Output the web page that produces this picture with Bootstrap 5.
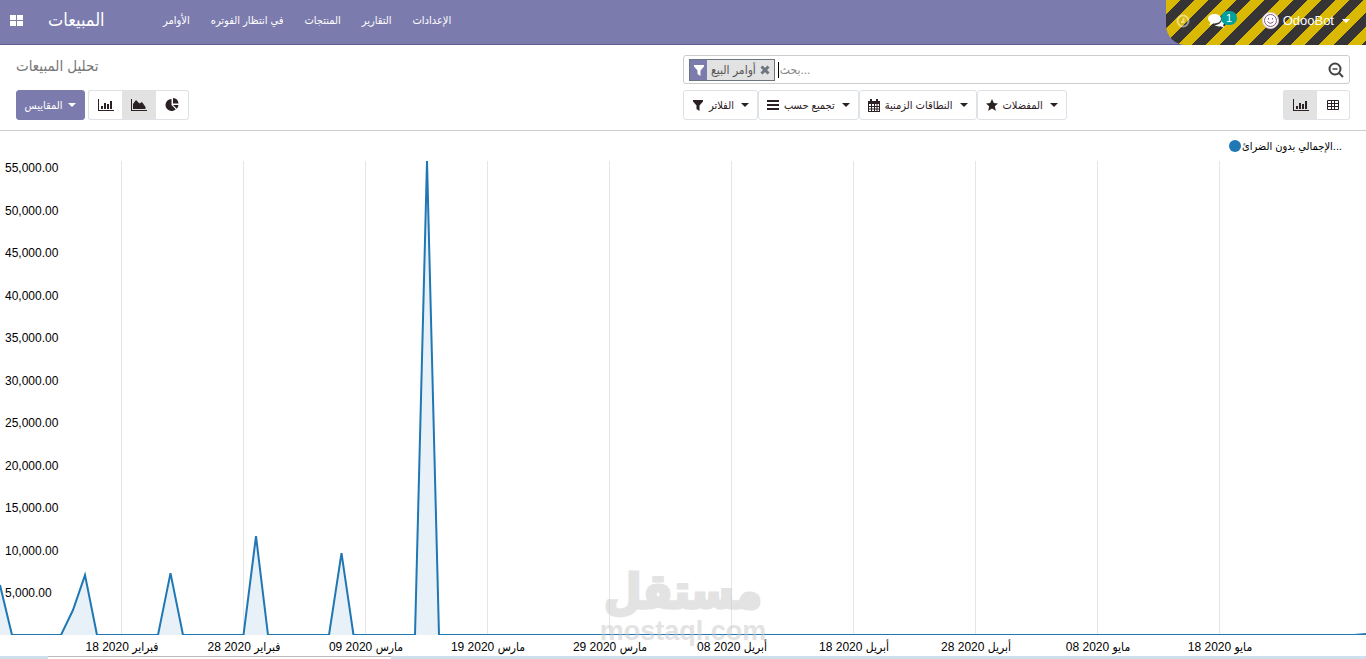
<!DOCTYPE html>
<html lang="ar" dir="ltr">
<head>
<meta charset="utf-8">
<meta name="viewport" content="width=device-width, initial-scale=1">
<title>تحليل المبيعات</title>
<link href="https://cdn.jsdelivr.net/npm/bootstrap@5.3.0/dist/css/bootstrap.min.css" rel="stylesheet">
<style>
body{font-family:"Liberation Sans","DejaVu Sans Condensed","DejaVu Sans",sans-serif;font-size:12px;line-height:18px;color:#212529}
svg{display:block;flex:none}
button{line-height:18px}
.topbar{height:45px;background:#7c7bad;border-bottom:1px solid #5f5e97;color:#fff}
.topbar a{color:#fff;text-decoration:none}
.apps{width:32px;padding-left:10px}
.brandname{font-size:18px;line-height:24px;width:83px;padding-left:16px}
.menu{gap:21px;margin-left:48px;font-size:11px}
.systray{width:200px;margin-bottom:-1px;border-bottom-left-radius:20px;background:repeating-linear-gradient(135deg,#d9b904,#d9b904 10px,#373435 10px,#373435 20px);font-size:13px}
.activity{opacity:.5;margin-left:10px}
.talk{margin-left:18px}
.count{font-size:11px;line-height:14px;padding:0 5px;background:#00a09d;font-weight:400;margin:-6px 0 0 -4px}
.caret{width:0;height:0;border:4px solid transparent;border-top-color:currentColor;border-bottom:0}
.panel{border-bottom:1px solid #ccc;height:86px;padding:10px 16px}
.panel h1{font-size:15px;line-height:22px;color:#777}
.tool{height:30px;border:1px solid #dee2e6;background:#fff;color:#2b2024;border-radius:3px;font-size:11px;padding:0 9px;display:flex;align-items:center;justify-content:center}
.tool.picked{background:#e2e2e2}
.measures{background:#7c7bad;border-color:#7c7bad;color:#fff;gap:6px;width:69px}
.iconset{margin-left:3px}
.iconset .tool{border-radius:0;border-width:1px 0;padding:0;width:34px}
.iconset .tool:first-child{border-left-width:1px;border-radius:3px 0 0 3px}
.iconset .tool:last-child{border-right-width:1px;border-radius:0 3px 3px 0;width:33px}
.searchbox{height:29px;border:1px solid #ccc;border-radius:3px;padding:0 5px}
.searchbox input{font-size:12px;color:#555;border:0;outline:0;height:20px;padding:0 1px;background:none}
.searchbox input::placeholder{color:#888}
.facet{height:22px;border:1px solid #6c757d;background:#e2e2e2;color:#555}
.facet .funnel{background:#7c7bad;width:17px}
.facet button{border:0;padding:0;background:none;color:#6c757d}
.cursorbar{width:1px;height:16px;background:#000;margin-left:3px}
.toolrow{margin-top:6px}
.filters .tool{gap:5px;padding:0 8px}
.filters .caret{margin-left:2px}
.legend{height:30px;padding-right:24px;font-size:11px;color:#000}
.dot{width:12px;height:12px;border-radius:50%;background:#1f77b4;margin-right:1px}
.plot{min-height:300px}
.yaxis{left:5px;top:-2px;bottom:33px;color:#000}
.xaxis{display:grid;grid-template-columns:61fr repeat(10,122fr) 85fr;height:21px;padding-top:3px;color:#000}
.xaxis span{text-align:center;white-space:nowrap}
.xaxis span:first-child{grid-column:2}
.taskstrip{height:3px;background:#d0dfec}
.taskstrip span{margin-left:48px;width:343px;background:#fff;border-top:1px solid #bbb}
.stamp{left:50%;bottom:14px;transform:translateX(-50%);color:#c8c8c8;opacity:.5;font-weight:700;pointer-events:none}
.stamp div:first-child{font:700 48px/58px "DejaVu Sans Condensed","DejaVu Sans",sans-serif;-webkit-text-stroke:3px #c8c8c8}
.stamp div:last-child{font-size:27px;line-height:22px}
</style>
</head>
<body class="d-flex flex-column min-vh-100">
<svg class="d-none">
<symbol id="funnel" viewBox="0 0 12 12"><path fill="currentColor" d="M1 1h10v1.500L7.500 6.500V12L4.500 10V6.500L1 2.500z"/></symbol>
<symbol id="bars" viewBox="0 0 16 12"><path fill="currentColor" d="M0 0h1v11h15v1H0zM3 7h2v3H3zM6 4h2v6H6zM9 5h2v5H9zM12 2h2v8h-2z"/></symbol>
<symbol id="area" viewBox="0 0 16 12"><path fill="currentColor" d="M0 0h1v11h15v1H0zM2 10V5l3-4 3.500 3.500L11 3l3.500 5v2z"/></symbol>
</svg>
<header class="topbar d-flex">
  <a href="#" class="apps d-flex align-items-center pb-1" aria-label="التطبيقات"><svg width="13" height="11" viewBox="0 0 13 11"><path fill="currentColor" d="M0 0h6v5H0zM7 0h6v5H7zM0 6h6v5H0zM7 6h6v5H7z"/></svg></a>
  <a href="#" class="brandname align-self-center text-nowrap pb-1">المبيعات</a>
  <nav class="menu d-flex align-items-center pb-1 text-nowrap">
    <a href="#">الأوامر</a><a href="#">في انتظار الفوتره</a><a href="#">المنتجات</a><a href="#">التقارير</a><a href="#">الإعدادات</a>
  </nav>
  <div class="systray ms-auto d-flex align-items-center pb-1">
    <a href="#" class="activity" aria-label="الأنشطة"><svg width="14" height="14" viewBox="0 0 14 14" fill="none" stroke="currentColor" stroke-width="2"><circle cx="7" cy="7" r="5.500"/><path d="M7.500 4v4H5"/></svg></a>
    <a href="#" class="talk d-flex align-items-center" aria-label="المحادثات"><svg width="17" height="14" viewBox="0 0 17 14"><path fill="currentColor" d="M6.500 0C10 0 13 2 13 4.800S10 9.500 6.500 9.500L5 9.400 1 11.500 2.500 8.500C1 7.600 0 6.400 0 4.800 0 2 3 0 6.500 0zM14 4.500c4 2 3.500 5 1 6.500l1.500 3-4-1.800c-2 .5-4.500 0-6-1.200C11 11 14 8.500 14 4.500z"/></svg><span class="badge rounded-pill count">1</span></a>
    <a href="#" class="d-flex align-items-center gap-1 ms-auto me-3"><svg width="17" height="17" viewBox="0 0 17 17"><circle cx="8.500" cy="8.500" r="8" fill="#fff" stroke="#d8ccd4"/><g fill="none" stroke="#875a7b"><circle cx="8.500" cy="8.500" r="6"/><path d="M5.500 9.500q3 3.500 6 0M6.500 6v1.500M10.500 6v1.500"/></g></svg>OdooBot<span class="caret ms-1"></span></a>
  </div>
</header>
<section class="panel">
  <div class="row g-0">
    <div class="col-6 d-flex flex-column">
      <h1 class="m-0 mb-auto">تحليل المبيعات</h1>
      <div class="d-flex">
        <button class="tool measures">المقاييس<span class="caret"></span></button>
        <div class="iconset d-flex">
          <button class="tool" aria-label="أعمدة"><svg width="16" height="12"><use href="#bars"/></svg></button>
          <button class="tool picked" aria-label="خط"><svg width="16" height="12"><use href="#area"/></svg></button>
          <button class="tool" aria-label="دائري"><svg width="14" height="14" viewBox="0 0 14 14" fill="currentColor"><path d="M6.500 1v6l4.200 4.300A6 6 0 1 1 6.500 1zM8 0a6 6 0 0 1 5.500 5.500H8zM8 7h5.500a6 6 0 0 1-1.700 3.800z"/></svg></button>
        </div>
      </div>
    </div>
    <div class="col-6">
      <div class="searchbox d-flex align-items-center">
        <div class="facet d-flex align-items-center"><span class="funnel h-100 d-flex align-items-center justify-content-center text-white"><svg width="12" height="12"><use href="#funnel"/></svg></span><span class="px-1 text-nowrap">أوامر البيع</span><button class="pe-1" aria-label="إزالة"><svg width="10" height="10" viewBox="0 0 10 10"><path d="M1.500 1.500l7 7m0-7l-7 7" stroke="currentColor" stroke-width="3"/></svg></button></div>
        <span class="cursorbar"></span>
        <input class="flex-fill" type="text" placeholder="بحث..." aria-label="بحث">
        <svg width="16" height="16" viewBox="0 0 16 16" fill="none" stroke="#444" stroke-width="2"><circle cx="7" cy="7" r="5.500"/><path d="M11 11l4 4"/><path d="M4.500 7h5" stroke-width="1.500"/></svg>
      </div>
      <div class="toolrow d-flex justify-content-between">
        <div class="filters d-flex text-nowrap">
          <button class="tool"><svg width="12" height="12"><use href="#funnel"/></svg>الفلاتر<span class="caret"></span></button>
          <button class="tool"><svg width="12" height="10" viewBox="0 0 12 10"><path fill="currentColor" d="M0 0h12v2H0zM0 4h12v2H0zM0 8h12v2H0z"/></svg>تجميع حسب<span class="caret"></span></button>
          <button class="tool"><svg width="12" height="13" viewBox="0 0 12 13"><path fill="currentColor" fill-rule="evenodd" d="M0 2h2V0h2v2h4V0h2v2h2v11H0zM1 5v2h2V5zm3 0v2h2V5zm3 0v2h1.500V5zm2.500 0v2H11V5zM1 8v1.500h2V8zm3 0v1.500h2V8zm3 0v1.500h1.500V8zm2.500 0v1.500H11V8zM1 10.500V12h2v-1.500zm3 0V12h2v-1.500zm3 0V12h1.500v-1.500zm2.500 0V12H11v-1.500z"/></svg>النطاقات الزمنية<span class="caret"></span></button>
          <button class="tool"><svg width="12" height="12" viewBox="0 0 12 12"><path fill="currentColor" d="M6 0l1.800 4 4.200.400-3.200 2.900 1 4.400L6 9.400l-3.800 2.300 1-4.400L0 4.400 4.200 4z"/></svg>المفضلات<span class="caret"></span></button>
        </div>
        <div class="iconset d-flex">
          <button class="tool picked" aria-label="رسم بياني"><svg width="16" height="12"><use href="#bars"/></svg></button>
          <button class="tool" aria-label="جدول"><svg width="12" height="10" viewBox="0 0 12 10"><path d="M.5.5h11v9H.5zM0 3.500h12M0 6.500h12M4.500 0v10M7.500 0v10" fill="none" stroke="currentColor"/></svg></button>
        </div>
      </div>
    </div>
  </div>
</section>
<main class="flex-fill d-flex flex-column position-relative">
  <div class="legend d-flex align-items-center justify-content-end"><span class="dot"></span><span>الإجمالي بدون الضرائ...</span></div>
  <div class="plot flex-fill position-relative">
    <svg class="position-absolute w-100 h-100" viewBox="0 0 1366 475" preserveAspectRatio="none">
      <path d="M121.500 0v475M243.500 0v475M365.500 0v475M487.500 0v475M609.500 0v475M731.500 0v475M853.500 0v475M975.500 0v475M1097.500 0v475M1219.500 0v475" stroke="#e5e5e5"/>
      <path d="M0 475V425L12 475H61L73 450 85 415 97 475H158L170.500 413 183 475H243.500L256 376 268 475H329L341.500 393 353.500 475H415L427 0 439 475z" fill="#1f77b4" fill-opacity=".1"/>
      <path d="M0 425L12 475H61L73 450 85 415 97 475H158L170.500 413 183 475H243.500L256 376 268 475H329L341.500 393 353.500 475H415L427 0 439 475H1354L1366 474" fill="none" stroke="#1f77b4" stroke-width="2" vector-effect="non-scaling-stroke"/>
    </svg>
    <div class="yaxis position-absolute d-flex flex-column justify-content-between">
      <span>55,000.00</span><span>50,000.00</span><span>45,000.00</span><span>40,000.00</span><span>35,000.00</span><span>30,000.00</span><span>25,000.00</span><span>20,000.00</span><span>15,000.00</span><span>10,000.00</span><span>5,000.00</span>
    </div>
  </div>
  <div class="xaxis">
    <span>18 2020 فبراير</span><span>28 2020 فبراير</span><span>09 2020 مارس</span><span>19 2020 مارس</span><span>29 2020 مارس</span><span>08 2020 أبريل</span><span>18 2020 أبريل</span><span>28 2020 أبريل</span><span>08 2020 مايو</span><span>18 2020 مايو</span>
  </div>
  <div class="stamp position-absolute text-center"><div>مستقل</div><div>mostaql.com</div></div>
</main>
<footer class="taskstrip d-flex"><span></span></footer>
<script src="https://cdn.jsdelivr.net/npm/bootstrap@5.3.0/dist/js/bootstrap.bundle.min.js"></script>
</body>
</html>
